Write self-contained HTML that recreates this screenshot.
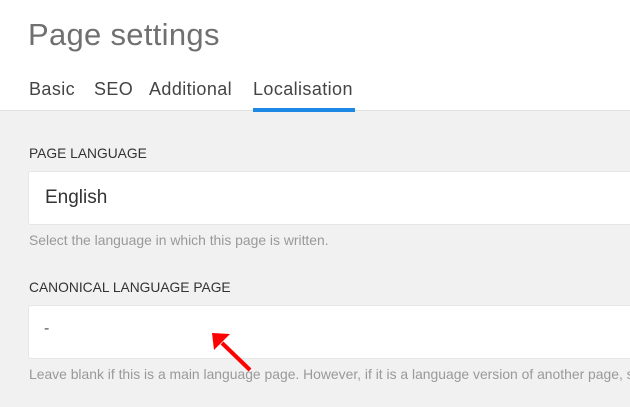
<!DOCTYPE html>
<html><head><meta charset="utf-8"><style>
*{margin:0;padding:0;box-sizing:border-box}
body{width:630px;height:407px;overflow:hidden;background:#f1f1f1;font-family:"Liberation Sans",Arial,sans-serif;position:relative}
.hdr{position:absolute;left:0;top:0;width:630px;height:111px;background:#fff;border-bottom:1px solid #e2e2e2}
.t{position:absolute;white-space:nowrap}
.title{left:28px;top:17px;font-size:31px;color:#707070;letter-spacing:0.3px}
.tab{top:79px;font-size:18px;color:#444;letter-spacing:0.4px}
.ul{position:absolute;left:253px;top:108px;width:102px;height:4px;background:#1e88e5}
.lbl{font-size:13.8px;color:#333;left:29px}
.box{position:absolute;left:28px;width:620px;height:54px;background:#fff;border:1px solid #e6e6e6;border-radius:3px}
.help{font-size:13.9px;color:#999;left:29px}
</style></head><body>
<div class="hdr"></div>
<div class="t title">Page settings</div>
<div class="t tab" style="left:29px">Basic</div>
<div class="t tab" style="left:94px">SEO</div>
<div class="t tab" style="left:149px">Additional</div>
<div class="t tab" style="left:253px">Localisation</div>
<div class="ul"></div>
<div class="t lbl" style="top:146px">PAGE LANGUAGE</div>
<div class="box" style="top:171px"></div>
<div class="t" style="left:45px;top:187px;font-size:19px;color:#333">English</div>
<div class="t help" style="top:232px">Select the language in which this page is written.</div>
<div class="t lbl" style="top:280px">CANONICAL LANGUAGE PAGE</div>
<div class="box" style="top:305px"></div>
<div class="t" style="left:44px;top:320px;font-size:16px;color:#555">-</div>
<div class="t help" style="top:366px">Leave blank if this is a main language page. However, if it is a language version of another page, s</div>
<svg style="position:absolute;left:0;top:0" width="630" height="407">
<line x1="250" y1="370" x2="222" y2="343" stroke="#f00" stroke-width="4"/>
<polygon points="212,333 230,334 214,350" fill="#f00"/>
</svg>
</body></html>
